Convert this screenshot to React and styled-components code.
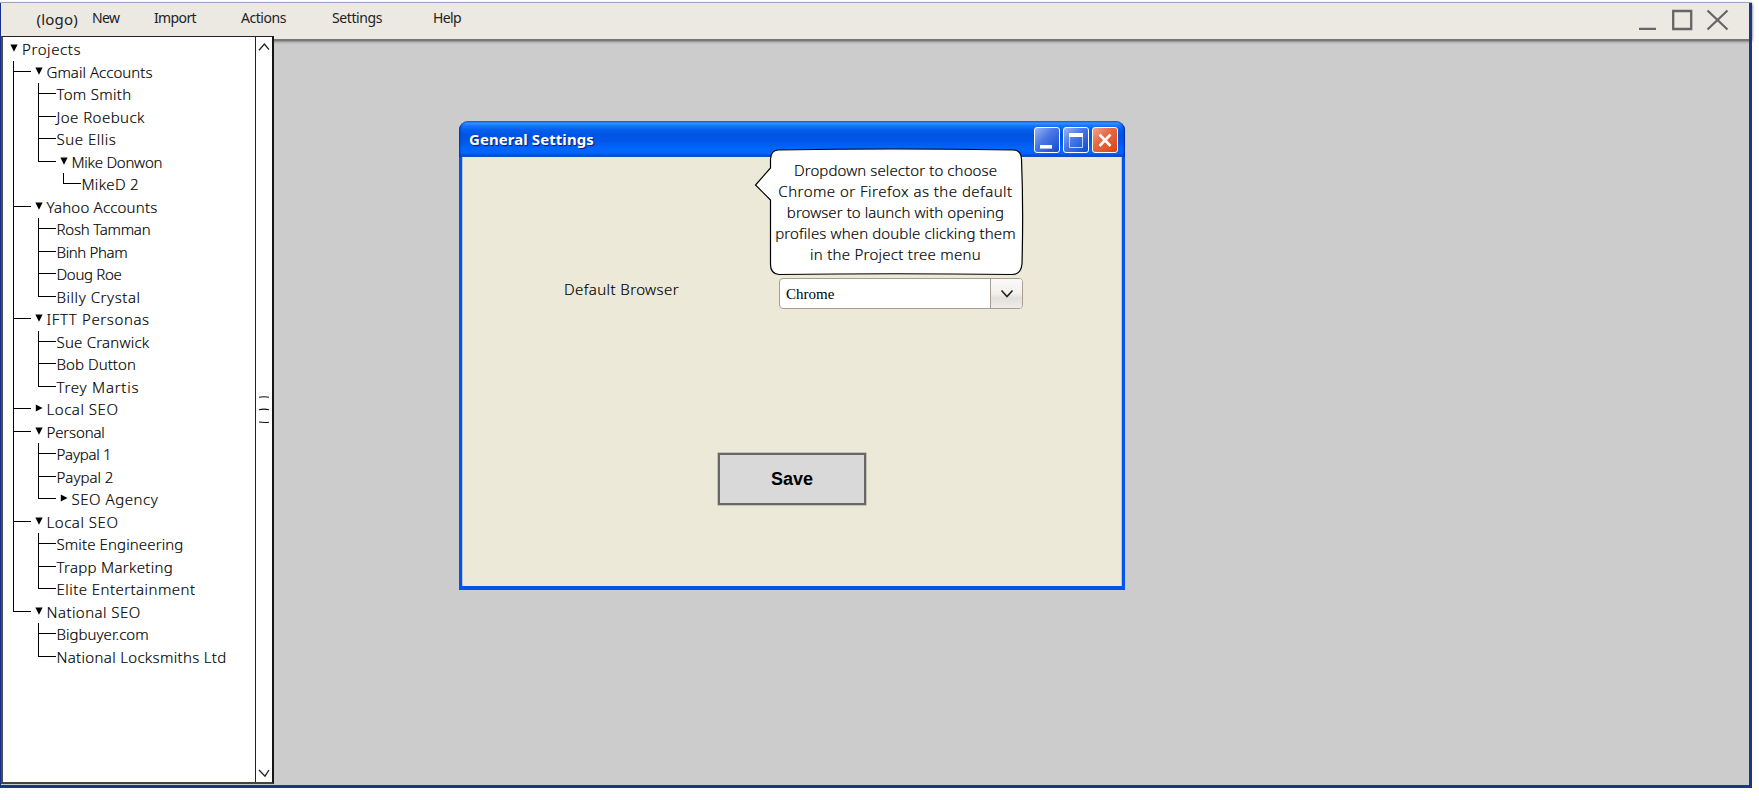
import React from 'react';
import styled, { createGlobalStyle } from 'styled-components';

const GlobalStyle = createGlobalStyle`
  * { box-sizing: border-box; }
  body { margin: 0; background: #fff; overflow: hidden; }
`;

const hand = `'Noto Sans', 'Open Sans', sans-serif`;

const Frame = styled.div`
  width: 1752px;
  height: 786px;
  margin-top: 2px;
  display: flex;
  flex-direction: column;
  border-top: 1px solid #b3bbd9;
  background: #ccc;
  position: relative;
  &::after {
    content: '';
    position: absolute;
    inset: 0;
    border-left: 1px solid #16308c;
    border-right: 3px solid #1d3587;
    border-bottom: 3px solid #1d3587;
    pointer-events: none;
  }
`;

const MenuBar = styled.header`
  height: 37px;
  flex: none;
  display: flex;
  align-items: flex-start;
  padding: 0 22px 0 36.5px;
  background: #ece9e2;
  border-bottom: 1px solid #77776f;
  box-shadow: 0 1px 3px rgba(0, 0, 0, 0.65);
`;

const Logo = styled.span`
  width: 55.5px;
  padding-top: 5px;
  font: 400 15px/22px ${hand};
  letter-spacing: 0.2px;
  color: #222;
`;

const MenuItem = styled.a`
  width: ${(p) => p.$width}px;
  padding-top: 5px;
  font: 400 14px/20px ${hand};
  letter-spacing: ${(p) => p.$track}px;
  white-space: nowrap;
  color: #222;
`;

const FrameButtons = styled.div`
  display: flex;
  margin-left: auto;
  padding-top: 6px;
`;

const Workspace = styled.div`
  flex: 1;
  min-height: 0;
  display: flex;
  position: relative;
  padding-left: 1px;
  margin-top: -4px;
`;

const Sidebar = styled.aside`
  width: 273px;
  height: 748px;
  display: flex;
  background: #fff;
  border: 1px solid #222;
  border-left: 2px solid #4c4c4c;
  border-right: 2px solid #151515;
  border-bottom: 2px solid #44443c;
`;

const Tree = styled.nav`
  flex: 1;
  padding: 1px 0 0 7px;
`;

const ScrollBar = styled.div`
  width: 17px;
  border-left: 1.5px solid #222;
  display: flex;
  flex-direction: column;
  align-items: center;
  justify-content: space-between;
  padding: 6px 1px 5px 0;
`;

const Branches = styled.ul`
  list-style: none;
  margin: 0;
  padding: 0 0 0 ${(p) => (p.$root ? 3 : 7.5)}px;
`;

const Branch = styled.li`
  display: flex;
`;

const Guide = styled.div`
  width: 17.5px;
  flex: none;
  display: flex;
  flex-direction: column;
`;

const Elbow = styled.div`
  height: 11px;
  border-left: 1px solid #000;
  border-bottom: 1px solid #000;
`;

const Trunk = styled.div`
  flex: 1;
  border-left: 1px solid #000;
`;

const Row = styled.div`
  height: 22.5px;
  display: flex;
  align-items: center;
  padding-left: ${(p) => (p.$root ? 0 : p.$leaf ? 1 : 4)}px;
`;

const Label = styled.span`
  font: 300 15px/22px ${hand};
  letter-spacing: ${(p) => (p.$track || 0) + 0.2}px;
  white-space: nowrap;
  color: #000;
  -webkit-text-stroke: 0.15px #000;
`;

const ArrowBox = styled.svg`
  width: 8px;
  height: 8px;
  flex: none;
  margin: -2px 4px 0 0;
`;

const Arrow = ({ open }) => (
  <ArrowBox viewBox="0 0 8 8">
    <path d={open ? 'M0.4 0.4h7.200L4 7.8z' : 'M0.8 0.5L7.6 4 0.8 7.5z'} fill="#000" />
  </ArrowBox>
);

const tree = [
  { t: 'Gmail Accounts', k: -0.16, c: [
    { t: 'Tom Smith', k: 0.1 }, { t: 'Joe Roebuck', k: 0.26 }, { t: 'Sue Ellis', k: 0.33 },
    { t: 'Mike Donwon', k: -0.45, c: [{ t: 'MikeD 2', k: 0.09 }] } ] },
  { t: 'Yahoo Accounts', k: 0, c: [
    { t: 'Rosh Tamman', k: -0.42 }, { t: 'Binh Pham', k: -0.55 }, { t: 'Doug Roe', k: -0.5 }, { t: 'Billy Crystal', k: 0.35 } ] },
  { t: 'IFTT Personas', k: 0.41, c: [
    { t: 'Sue Cranwick', k: 0.02 }, { t: 'Bob Dutton', k: -0.14 }, { t: 'Trey Martis', k: 0.56 } ] },
  { t: 'Local SEO', k: 0.33, closed: true },
  { t: 'Personal', k: -0.35, c: [
    { t: 'Paypal 1', k: -0.45 }, { t: 'Paypal 2', k: -0.2 }, { t: 'SEO Agency', k: 0.34, closed: true } ] },
  { t: 'Local SEO', k: 0.33, c: [
    { t: 'Smite Engineering', k: -0.08 }, { t: 'Trapp Marketing', k: 0.1 }, { t: 'Elite Entertainment', k: 0.25 } ] },
  { t: 'National SEO', k: 0.25, c: [
    { t: 'Bigbuyer.com', k: -0.17 }, { t: 'National Locksmiths Ltd', k: 0.12 } ] },
];

const TreeList = ({ nodes, root }) => (
  <Branches $root={root}>
    {nodes.map((n, i) => (
      <Branch key={n.t + i}>
        <Guide>
          <Elbow />
          {i < nodes.length - 1 && <Trunk />}
        </Guide>
        <div>
          <Row $leaf={!n.c && !n.closed}>
            {(n.c || n.closed) && <Arrow open={!n.closed} />}
            <Label $track={n.k}>{n.t}</Label>
          </Row>
          {n.c && <TreeList nodes={n.c} />}
        </div>
      </Branch>
    ))}
  </Branches>
);

const Dialog = styled.section`
  position: absolute;
  left: 459px;
  top: 85px;
  width: 666px;
  height: 469px;
  display: flex;
  flex-direction: column;
`;

const TitleBar = styled.div`
  height: 36px;
  flex: none;
  display: flex;
  align-items: flex-start;
  justify-content: space-between;
  padding: 6px 7px 0 10px;
  border-radius: 9px 9px 0 0;
  background: linear-gradient(#1567e8 0, #2f8dff 7%, #1a78fb 12%, #0560ee 24%, #0054e3 38%, #0056e8 55%, #0066ff 78%, #0064fb 90%, #0048d0 97%, #2c62c8 100%);
  box-shadow: inset 2px 0 2px -1px #0030b8, inset -2px 0 2px -1px #0020a8;
`;

const Title = styled.h1`
  margin: 0;
  font: bold 15px/25px 'Noto Sans', sans-serif;
  letter-spacing: 0.07px;
  color: #fff;
  text-shadow: 1px 1px 1px #0a1883;
`;

const TitleButtons = styled.div`
  display: flex;
  gap: 3px;
`;

const TitleButton = styled.button`
  width: 26px;
  height: 26px;
  padding: 0;
  display: flex;
  border: 1px solid #fff;
  border-radius: 3px;
  background: ${(p) => p.$danger
    ? 'linear-gradient(135deg, #f2a58d 0%, #e66a46 40%, #dc4310 100%)'
    : 'linear-gradient(135deg, #9db5f5 0%, #4a78e4 42%, #1148d0 100%)'};
`;

const Body = styled.div`
  flex: 1;
  border: solid #0054e6;
  border-width: 0 3px 4px;
  box-shadow: inset 1px 0 0 #b9c4da, inset -1px 0 0 #b9c4da;
  background: #ece9d8;
  padding: 121px 99px 0 102px;
  display: flex;
  flex-direction: column;
`;

const Field = styled.div`
  display: flex;
  justify-content: space-between;
  align-items: flex-start;
`;

const Combo = styled.div`
  width: 244px;
  height: 31px;
  display: flex;
  border: 1.5px solid #a79d92;
  border-radius: 4px;
  background: #fff;
  overflow: hidden;
`;

const ComboValue = styled.span`
  flex: 1;
  padding-left: 6px;
  font: 15px/31px 'Liberation Serif', serif;
  color: #000;
`;

const ComboButton = styled.span`
  width: 32px;
  border-left: 1px solid #a79d92;
  display: flex;
  align-items: center;
  justify-content: center;
  background: linear-gradient(#fbfaf9, #f1f0ed 50%, #e3e0da 65%, #eeece8);
`;

const SaveButton = styled.button`
  align-self: flex-start;
  width: 148px;
  height: 52px;
  margin: 143.5px 0 0 154px;
  padding: 0;
  border: 2px solid #686868;
  box-shadow: 0 0 0 0.5px #9a9a94;
  background: #d9d9d9;
  font: bold 18px/48px 'Liberation Sans', sans-serif;
  color: #000;
`;

const Callout = styled.div`
  position: absolute;
  left: 295px;
  top: 26.500px;
  width: 270px;
  height: 128px;
  padding: 12.500px 0 0 16px;
`;

const CalloutShape = styled.svg`
  position: absolute;
  left: 0;
  top: 0;
`;

const CalloutText = styled.p`
  position: relative;
  margin: 0;
  display: flex;
  flex-direction: column;
  align-items: center;
  width: 251px;
`;

const CalloutLine = styled(Label)`
  height: 21px;
  line-height: 21px;
`;

const menus = [['New', 62, -0.59], ['Import', 87, -0.63], ['Actions', 91, -0.45], ['Settings', 101, -0.41], ['Help', 40, -0.62]];

const lines = [
  ['Dropdown selector to choose', -0.1],
  ['Chrome or Firefox as the default', 0.27],
  ['browser to launch with opening', -0.14],
  ['profiles when double clicking them', -0.08],
  ['in the Project tree menu', 0.07],
];

export default function App() {
  return (
    <>
      <GlobalStyle />
      <Frame>
        <MenuBar>
          <Logo>(logo)</Logo>
          {menus.map(([t, w, k]) => <MenuItem key={t} $width={w} $track={k}>{t}</MenuItem>)}
          <FrameButtons>
            <svg width="92" height="24" fill="none" stroke="#666" strokeWidth="2.3">
              <path d="M1 19.8h17M35.2 2h18v18h-18z" />
              <path d="M69.500 1.5l20 19M89.500 1.5l-20 19" />
            </svg>
          </FrameButtons>
        </MenuBar>
        <Workspace>
          <Sidebar>
            <Tree>
              <Row $root>
                <Arrow open />
                <Label $track={0.4}>Projects</Label>
              </Row>
              <TreeList nodes={tree} root />
            </Tree>
            <ScrollBar>
              <svg width="12" height="8" fill="none" stroke="#222" strokeWidth="1.3"><path d="M1 7.2L6.4 1L11 6.6" /></svg>
              <svg width="12" height="28" fill="none" stroke="#111" strokeWidth="1.1"><path d="M1 1.2q5-1 10 0M1 13.8q5-1.4 10 0M1 26q5 .8 10 .3" /></svg>
              <svg width="12" height="8" fill="none" stroke="#222" strokeWidth="1.3"><path d="M1 1L7 7.2L11 1" /></svg>
            </ScrollBar>
          </Sidebar>
          <Dialog>
            <TitleBar>
              <Title>General Settings</Title>
              <TitleButtons>
                <TitleButton><svg width="24" height="24"><path d="M5 17h12v3.6H5z" fill="#fff" /></svg></TitleButton>
                <TitleButton>
                  <svg width="24" height="24"><path d="M5.5 7v12.5h13V7" fill="none" stroke="#c4d2f8" /><path d="M5 5h14v4H5z" fill="#fff" /></svg>
                </TitleButton>
                <TitleButton $danger>
                  <svg width="24" height="24"><path d="M6.5 6.5l11 11.5M17.5 6.5l-11 11.5" stroke="#fff" strokeWidth="2.6" /></svg>
                </TitleButton>
              </TitleButtons>
            </TitleBar>
            <Body>
              <Field>
                <Label $track={0.2}>Default Browser</Label>
                <Combo>
                  <ComboValue>Chrome</ComboValue>
                  <ComboButton>
                    <svg width="14" height="10" fill="none" stroke="#222" strokeWidth="1.6"><path d="M1.5 1.5L7 7.5l5.500-6" /></svg>
                  </ComboButton>
                </Combo>
              </Field>
              <SaveButton>Save</SaveButton>
            </Body>
            <Callout>
              <CalloutShape width="270" height="128">
                <path d="M24 2Q140 0 259 2Q267 2 267.500 11Q269.500 60 268 116Q267 126.500 258 126.500Q140 125 25 126.500Q16 126 16.500 115V52L1.500 37L16.500 20V11Q17 2.500 24 2Z" fill="#fff" stroke="#000" strokeWidth="1.2" />
              </CalloutShape>
              <CalloutText>
                {lines.map(([t, k]) => <CalloutLine key={t} $track={k}>{t}</CalloutLine>)}
              </CalloutText>
            </Callout>
          </Dialog>
        </Workspace>
      </Frame>
    </>
  );
}
